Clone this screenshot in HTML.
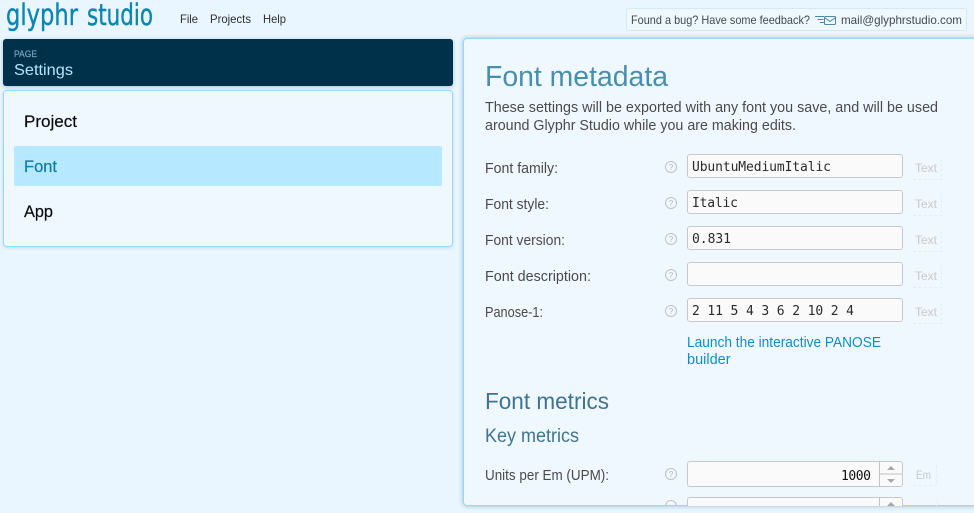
<!DOCTYPE html>
<html><head><meta charset="utf-8"><style>
html,body{margin:0;padding:0;width:974px;height:513px;overflow:hidden;background:#e9f6ff}
body{position:relative;font-family:"Liberation Sans",sans-serif}
.b{position:absolute;box-sizing:border-box}
.in{left:687px;width:216px;height:24px;background:#fafafa;border:1px solid #c8c8c8;border-radius:3px}
.u{left:913px;width:29px;height:25px;border-right:1px dashed #e6ecf0;border-bottom:1px dashed #e6ecf0;border-top-right-radius:6px}
svg{position:absolute;left:0;top:0}
text{font-family:"Liberation Sans",sans-serif;white-space:pre}
.m{font-family:"DejaVu Sans Mono","Liberation Mono",monospace;font-size:13px;fill:#2a2a2a}
.l{font-size:14.5px;fill:#4a4a4a}
.ut{font-size:11.5px;fill:#c6c9cb}
.n{font-size:17px;fill:#0a0a12;stroke:#0a0a12;stroke-width:.2}
.logo{font-family:"DejaVu Sans",sans-serif;font-size:29px;fill:#0b85b4;stroke:#0b85b4;stroke-width:.4}
</style></head><body>
<div class="b" style="left:626px;top:8px;width:341px;height:23px;background:#eff8fd;border:1px solid #d6e9f3;border-radius:3px"></div>
<div class="b" style="left:3px;top:39px;width:450px;height:47px;background:#00314a;border-radius:3px;box-shadow:0 1px 4px rgba(60,90,110,.35)"></div>
<div class="b" style="left:3px;top:90px;width:450px;height:157px;background:#f0f8ff;border:1px solid #92dcf9;border-radius:4px;box-shadow:0 1px 3px rgba(60,100,130,.2)"></div>
<div class="b" style="left:14px;top:146px;width:428px;height:40px;background:#b6e9ff;border-radius:2px"></div>
<div class="b" style="left:463px;top:38px;width:530px;height:468px;background:#f0f8ff;border:1px solid #92dcf9;border-radius:4px;box-shadow:0 0 5px rgba(50,90,120,.4);overflow:hidden">
</div>
<div class="b in" style="top:154px"></div>
<div class="b in" style="top:190px"></div>
<div class="b in" style="top:226px"></div>
<div class="b in" style="top:262px"></div>
<div class="b in" style="top:298px"></div>
<div class="b in" style="top:461px;height:26px"></div>
<div class="b in" style="top:497px;height:9px;border-bottom:0;border-radius:3px 3px 0 0"></div>
<div class="b u" style="top:155px"></div>
<div class="b u" style="top:191px"></div>
<div class="b u" style="top:227px"></div>
<div class="b u" style="top:263px"></div>
<div class="b u" style="top:299px"></div>
<div class="b u" style="top:461px;width:24px;height:25px"></div>
<div class="b" style="left:913px;top:497px;width:24px;height:9px;border-right:1px dashed #e6ecf0;border-top-right-radius:6px"></div>
<svg width="974" height="513" viewBox="0 0 974 513">
<text class="logo" x="6" y="25" textLength="72" lengthAdjust="spacingAndGlyphs">glyphr</text>
<text class="logo" x="87" y="25" textLength="66" lengthAdjust="spacingAndGlyphs">studio</text>
<g font-size="12" fill="#2e2e33">
<text x="180" y="23" textLength="18" lengthAdjust="spacingAndGlyphs">File</text>
<text x="210" y="23" textLength="41" lengthAdjust="spacingAndGlyphs">Projects</text>
<text x="263" y="23" textLength="23" lengthAdjust="spacingAndGlyphs">Help</text>
</g>
<g font-size="12" fill="#3f4a50">
<text x="631" y="24" textLength="179" lengthAdjust="spacingAndGlyphs">Found a bug? Have some feedback?</text>
<text x="841" y="24" textLength="121" lengthAdjust="spacingAndGlyphs">mail@glyphrstudio.com</text>
</g>
<g fill="none" stroke="#4f88a6" stroke-width="1">
<rect x="824.5" y="16.5" width="11" height="8" rx="1"/>
<path d="M824.5 17.5l5.5 4 5.5-4M815 16.5h9M817.5 19.5h6M820 22.5h4"/>
</g>
<text x="14" y="57" textLength="23" lengthAdjust="spacingAndGlyphs" font-size="9" fill="#6ba6c4" stroke="#6ba6c4" stroke-width=".2">PAGE</text>
<text x="14" y="75" textLength="59" lengthAdjust="spacingAndGlyphs" font-size="16" fill="#b2e6ff">Settings</text>
<text class="n" x="24" y="127" textLength="53" lengthAdjust="spacingAndGlyphs">Project</text>
<text x="24" y="172" textLength="33" lengthAdjust="spacingAndGlyphs" font-size="17" fill="#0b7ba8" stroke="#0b7ba8" stroke-width=".2">Font</text>
<text class="n" x="24" y="217" textLength="29" lengthAdjust="spacingAndGlyphs">App</text>
<text x="485" y="86" textLength="183" lengthAdjust="spacingAndGlyphs" font-size="29" fill="#488fae">Font metadata</text>
<text class="l" x="485" y="112" textLength="453" lengthAdjust="spacingAndGlyphs">These settings will be exported with any font you save, and will be used</text>
<text class="l" x="485" y="130" textLength="311" lengthAdjust="spacingAndGlyphs">around Glyphr Studio while you are making edits.</text>
<text class="l" x="485" y="173" textLength="73" lengthAdjust="spacingAndGlyphs">Font family:</text>
<text class="l" x="485" y="209" textLength="64" lengthAdjust="spacingAndGlyphs">Font style:</text>
<text class="l" x="485" y="245" textLength="80" lengthAdjust="spacingAndGlyphs">Font version:</text>
<text class="l" x="485" y="281" textLength="106" lengthAdjust="spacingAndGlyphs">Font description:</text>
<text class="l" x="485" y="317" textLength="58" lengthAdjust="spacingAndGlyphs">Panose-1:</text>
<text class="m" x="692" y="171" textLength="139">UbuntuMediumItalic</text>
<text class="m" x="692" y="207" textLength="46">Italic</text>
<text class="m" x="692" y="243" textLength="39">0.831</text>
<text class="m" x="692" y="315" textLength="162">2 11 5 4 3 6 2 10 2 4</text>
<text class="m" x="841" y="480" textLength="30" style="fill:#111">1000</text>
<text class="ut" x="915" y="172" textLength="22" lengthAdjust="spacingAndGlyphs">Text</text>
<text class="ut" x="915" y="208" textLength="22" lengthAdjust="spacingAndGlyphs">Text</text>
<text class="ut" x="915" y="244" textLength="22" lengthAdjust="spacingAndGlyphs">Text</text>
<text class="ut" x="915" y="280" textLength="22" lengthAdjust="spacingAndGlyphs">Text</text>
<text class="ut" x="915" y="316" textLength="22" lengthAdjust="spacingAndGlyphs">Text</text>
<text class="ut" x="916" y="479" textLength="15" lengthAdjust="spacingAndGlyphs">Em</text>
<text x="687" y="347" textLength="194" lengthAdjust="spacingAndGlyphs" font-size="14.5" fill="#0a8fc6">Launch the interactive PANOSE</text>
<text x="687" y="364" font-size="14.5" fill="#0a8fc6">builder</text>
<text x="485" y="409" textLength="124" lengthAdjust="spacingAndGlyphs" font-size="23" fill="#3f7390">Font metrics</text>
<text x="485" y="442" textLength="94" lengthAdjust="spacingAndGlyphs" font-size="19" fill="#3f7390">Key metrics</text>
<text class="l" x="485" y="480" textLength="124" lengthAdjust="spacingAndGlyphs">Units per Em (UPM):</text>
<g fill="none" stroke="#c2c2c2" stroke-width="1">
<circle cx="671" cy="167" r="5.5"/><circle cx="671" cy="203" r="5.5"/><circle cx="671" cy="239" r="5.5"/><circle cx="671" cy="275" r="5.5"/><circle cx="671" cy="311" r="5.5"/><circle cx="671" cy="474" r="5.5"/>
<path d="M665.5 506a5.5 5.5 0 0 1 11 0"/>
<path d="M879.5 461v26M880 474h23M879.5 497v9"/>
</g>
<g font-size="8" fill="#b5b5b5" text-anchor="middle">
<text x="671" y="170">?</text><text x="671" y="206">?</text><text x="671" y="242">?</text><text x="671" y="278">?</text><text x="671" y="314">?</text><text x="671" y="477">?</text>
</g>
<g fill="#a8a8a8">
<path d="M887 470h8l-4-4z"/><path d="M887 479h8l-4 4z"/><path d="M887 506h8l-4-4z"/>
</g>
</svg>
</body></html>
